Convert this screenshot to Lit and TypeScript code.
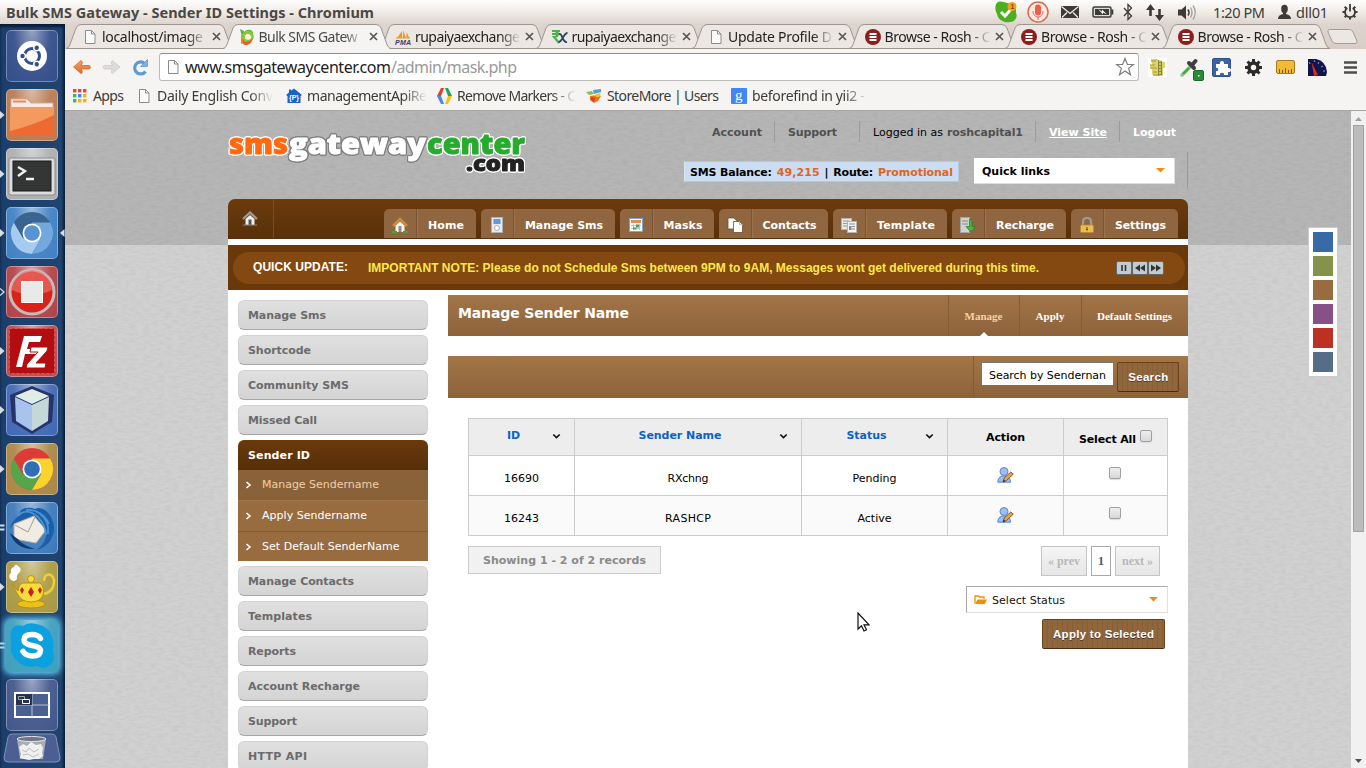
import { LitElement, html, css, svg, nothing } from "lit";
import { customElement, property } from "lit/decorators.js";

/** Text that is tracked in or out so that its run has a known width. */
@customElement("fit-text")
class FitText extends LitElement {
  @property({ type: Number }) w = 0;
  static styles = css`
    :host { display: inline-block; white-space: pre; flex: none; text-align: left; }
  `;
  render() { return html`<slot></slot>`; }
  updated() {
    const text = this.textContent || "";
    if (!this.w || !text.length) return;
    this.style.letterSpacing = "0px";
    this.style.width = "auto";
    const range = document.createRange();
    range.selectNodeContents(this);
    const natural = range.getBoundingClientRect().width;
    this.style.letterSpacing = `${(this.w - natural) / Math.max(1, text.length - 1)}px`;
    this.style.width = `${this.w}px`;
  }
}

const t = (s: string, w: number, cls = "") => html`<fit-text class=${cls} .w=${w}>${s}</fit-text>`;

const pageIcon = svg`<path d="M3.5 1.5h6l3.5 3.5v9.5h-9.5z" fill="#fbfbfb" stroke="#8b8b8b"/><path d="M9.5 1.5v3.5h3.500" fill="none" stroke="#8b8b8b"/>`;
const browseIcon = svg`<circle cx="8" cy="8" r="8" fill="#8b1f1f"/><path d="M4.500 5h7M4.500 8h7M4.500 11h7" stroke="#fff" stroke-width="1.800"/>`;
const greenP = svg`<path d="M2 5l3 1v8l-3 1z" fill="#f08a2a"/><path d="M1 0l4 2 1 3c-2 1-4 0-4-1z" fill="#5cb531"/><path d="M6 2c5-3 9 0 8 4-1 2-5 1-8 0z" fill="#5cb531"/><circle cx="9" cy="7.500" r="4.500" fill="none" stroke="#8cc63a" stroke-width="2.500"/><circle cx="9" cy="7.500" r="2.800" fill="#fff3d0"/><path d="M4 10c2 4 7 3 10-1-1 5-4 7-7 7s-4-2-3-6z" fill="#e8602a"/>`;
const pma = svg`<path d="M2 9l5-7v7zM8 9V1l3 8zM11.500 9l0-6 3 6z" fill="#f49a1a"/><path d="M1 9h14" stroke="#e0a040" stroke-width="1"/><text x="0" y="16" font-size="7" font-weight="700" font-style="italic" font-family="Liberation Sans, sans-serif" fill="#3a3a6a" textLength="16">PMA</text>`;
const rupee = svg`<path d="M0 2h8M0 5h8M2 2c5 0 5 6 0 6l5 6" fill="none" stroke="#4caf50" stroke-width="2.200"/><path d="M7 5c4-1 3 9 8 8M15.500 4c-4 0-5 9-9 9" fill="none" stroke="#2b4663" stroke-width="1.800"/>`;

const tabs = [
  { icon: pageIcon, text: "localhost/image", w: 101 },
  { icon: greenP, text: "Bulk SMS Gatew", w: 99, active: true },
  { icon: pma, text: "rupaiyaexchange", w: 105 },
  { icon: rupee, text: "rupaiyaexchange", w: 105 },
  { icon: pageIcon, text: "Update Profile D", w: 104 },
  { icon: browseIcon, text: "Browse - Rosh - C", w: 106 },
  { icon: browseIcon, text: "Browse - Rosh - C", w: 106 },
  { icon: browseIcon, text: "Browse - Rosh - C", w: 106 },
];

const bookmarks = [
  { box: 64, w: 31, text: "Apps", icon: svg`${[0, 1, 2].map(r => [0, 1, 2].map(c => svg`<rect x=${1 + c * 5} y=${1 + r * 5} width="3.400" height="3.400" fill=${[["#e8453c", "#e8453c", "#e8453c"], ["#3cba54", "#4285f4", "#f4b400"], ["#3cba54", "#f4b400", "#f4b400"]][r][c]}/>`))}` },
  { box: 150, w: 116, text: "Daily English Conv", fade: true, icon: pageIcon },
  { box: 150, w: 120, text: "managementApiRe", fade: true, icon: svg`<path d="M8 .5L16 7l-1.500 1V15h-13V8L0 7l3-2.500V1.500h2.200v1.300z" fill="#1565c8"/><text x="3" y="12" font-size="7" font-weight="700" font-family="Liberation Sans, sans-serif" fill="#fff" textLength="10">{P}</text>` },
  { box: 150, w: 119, text: "Remove Markers - C", fade: true, icon: svg`<path d="M5 0h3L5 8H1z" fill="#e33b2e"/><path d="M1 8h4l3 8H5z" fill="#4a86ee"/><path d="M9 0h3l4 8h-4z" fill="#1da462"/><path d="M12 8h4l-4 8H9z" fill="#fbbf12"/>` },
  { box: 145, w: 112, text: "StoreMore | Users", icon: svg`<path d="M0 4l6-1 2 3-5 1z" fill="#7cc653"/><path d="M7 2l8-1v3l-7 2z" fill="#5b9bd5"/><path d="M4 8l8-1 3 1-3 5-4 2-4-3z" fill="#f0721d"/><path d="M5 9l4 1-1 4-3-2z" fill="#d8401f"/><path d="M10 6l5-1-2 4-3 0z" fill="#f7c52c"/>` },
  { box: 140, w: 116, text: "beforefind in yii2 - ", fade: true, icon: svg`<rect width="16" height="16" rx="1" fill="#4285f4"/><text x="4" y="12" font-size="15" font-family="Liberation Serif, serif" fill="#fff">g</text>` },
];

const trayIcons = html`<svg class="tray" width="218" height="24" viewBox="995 0 218 24">
  <path d="M996 4c3-4 7-2 11-1 6 0 10 5 9 10 2 4-1 9-6 9-4 1-12-1-13-8-2-3-2-7-1-10z" fill="#4caf22"/>
  <path d="M1001 12l4 4 7-8" fill="none" stroke="#fff" stroke-width="3"/>
  <circle cx="1012" cy="6.500" r="4.500" fill="#f5a21a"/><text x="1010.500" y="9" font-size="7" font-weight="700" font-family="Liberation Sans, sans-serif" fill="#7a4a00">1</text>
  <circle cx="1038" cy="12" r="10" fill="#fbe9e2" stroke="#dc6a48" stroke-width="1.500"/>
  <rect x="1035" y="4.500" width="6" height="11" rx="3" fill="#e8604c"/><path d="M1033 11c0 8 10 8 10 0M1038 17v3" fill="none" stroke="#e8604c"/>
  <rect x="1061" y="6" width="18" height="12" fill="#3c3b37"/><path d="M1061.500 6.500l8.500 7 8.500-7M1062 17.500l5-5M1078 17.500l-5-5" fill="none" stroke="#f3efeb" stroke-width="1.300"/>
  <rect x="1093" y="7" width="18" height="10" rx="1.500" fill="#ddd" stroke="#3c3b37" stroke-width="1.500"/><rect x="1095" y="9" width="14" height="6" fill="#3c3b37"/><rect x="1111.500" y="9.500" width="1.800" height="5" fill="#3c3b37"/><path d="M1098 9l4 2.500 0-2 5 5-4-2 0 2z" fill="#fff"/>
  <path d="M1124 8l7.500 8-3.500 3.500V4.500l3.500 3.500-7.500 8" fill="none" stroke="#3c3b37" stroke-width="1.300"/>
  <path d="M1150.500 16V8M1159.500 9v8" stroke="#3c3b37" stroke-width="2.600"/><path d="M1146 10l4.500-6 4.500 6zM1155 15l4.500 6 4.500-6z" fill="#3c3b37"/>
  <path d="M1178 9.500h3.500l4.500-4v14l-4.500-4h-3.500z" fill="#3c3b37"/><path d="M1188 9.500q2 3 0 6" fill="none" stroke="#3c3b37" stroke-width="1.500"/><path d="M1190.500 7.500q3 5 0 10M1193 5.500q4.500 7 0 14" fill="none" stroke="#a9a5a0" stroke-width="1.400"/>
</svg>`;

const navIcons = html`<svg width="94" height="36" viewBox="65 49 94 36">
  <defs><linearGradient id="ba" x2="0" y2="1"><stop stop-color="#f7a468"/><stop offset="1" stop-color="#dd6a26"/></linearGradient></defs>
  <path d="M73.500 67l7.500-6.500q2 1 1 3.500l-1 1.500h8.500q2 1.500 0 3.500h-8.500l1 1.500q1 2.500-1 3z" fill="url(#ba)" stroke="#cf6a30" stroke-width=".8"/>
  <path d="M120 67l-7.500-6.500q-2 1-1 3.500l1 1.500h-8.500q-2 1.500 0 3.500h8.500l-1 1.500q-1 2.500 1 3z" fill="#dddcda" stroke="#cccac7" stroke-width=".8"/>
  <path d="M145.500 71.500a6 6 0 1 1-1.500-8.500" fill="none" stroke="#5f9bd3" stroke-width="3.200"/><path d="M140.500 66.500h7v-7z" fill="#7fb2e2" stroke="#5f9bd3" stroke-width=".8"/>
</svg>`;

const extIcons = html`<svg width="227" height="36" viewBox="1139 49 227 36">
  <rect x="1148" y="58" width="19" height="19" fill="#fff"/><path d="M1151 59h7v3h7v6h-2v8h-9l-2-2v-5h-2v-4h2z" fill="#dcd26a"/><path d="M1151 61h5M1150 65h5M1151 68h6M1153 72h4M1153 75h7" stroke="#a2973a" stroke-width="1.200"/><path d="M1158 60l4 1v14l-4 1z" fill="#8f8530"/><path d="M1160 60v16" stroke="#f5eea0" stroke-width="1.200" stroke-dasharray="2 1"/>
  <path d="M1182 75l9-9" stroke="#8cc58a" stroke-width="3.500" stroke-linecap="round"/><path d="M1183 74l6-6" stroke="#2fae3c" stroke-width="2"/><path d="M1189 63l5 5M1192 65l3.500-4" stroke="#3f3f3f" stroke-width="4" stroke-linecap="round"/>
  <rect x="1193.500" y="70.500" width="10" height="10" rx="1.500" fill="#2b8b3a" stroke="#1d6b2a"/><rect x="1198" y="75" width="1.500" height="1.500" fill="#fff"/>
  <rect x="1212.500" y="58.500" width="18" height="18" rx="1.500" fill="#3c62a4" stroke="#30518c"/><path d="M1215 64h4c-1-4 5-4 4 0h4v4c4-1 4 5 0 4v3h-4c1-3-5-3-4 0h-4v-4c3 1 3-4 0-3z" fill="#fff" transform="translate(1 0)"/>
  <g transform="translate(1253.500 67.500)"><circle r="4.500" fill="none" stroke="#2b2b2b" stroke-width="3.600"/>${[0, 45, 90, 135, 180, 225, 270, 315].map(a => svg`<rect x="-1.500" y="-8.500" width="3" height="3.500" fill="#2b2b2b" transform=${`rotate(${a})`}/>`)}</g>
  <rect x="1276.500" y="60.500" width="18" height="13" rx="1.500" fill="#f2bb35" stroke="#a37b20"/><path d="M1279.500 73v-4M1282.500 73v-3M1285.500 73v-5M1288.500 73v-3M1291.500 73v-4" stroke="#7d5a10"/>
  <path d="M1308 59h8q10 2 11 13l-1 4h-18z" fill="#11164a"/><path d="M1314 76l-2.500-14 6.500 13z" fill="#e0281e"/><path d="M1309 62l1 2M1314 60l1 2M1319 62l-1 2M1323 66l-2 1M1325 71l-2 0" stroke="#7f9bea"/>
  <path d="M1344 62.500h13M1344 67.500h13M1344 72.500h13" stroke="#4d4d4d" stroke-width="2.600"/>
</svg>`;

const chromeWheel = (top: string, left: string, right: string, mid: string) => svg`
  <circle cx="26" cy="26" r="21" fill=${top}/>
  <path d="M7.800 15.500A21 21 0 0 0 26 47l9.100-15.700L16.900 31.300z" fill=${left}/>
  <path d="M44.200 15.500A21 21 0 0 1 26 47l9.100-15.700L26 15.500z" fill=${right}/>
  <circle cx="26" cy="26" r="9.500" fill="#fff"/><circle cx="26" cy="26" r="7.800" fill=${mid}/>`;

const launcher = [
  { bg: "#2c4786", mark: "", g: svg`<circle cx="26" cy="26" r="15" fill="#fff"/><circle cx="26" cy="26" r="7.500" fill="none" stroke="#34508b" stroke-width="3"/>${[0, 120, 240].map(a => svg`<g transform=${`rotate(${a} 26 26)`}><circle cx="16.500" cy="26" r="3.600" fill="#fff"/><circle cx="16.500" cy="26" r="2.200" fill="#34508b"/></g>`)}` },
  { bg: "#b5764e", mark: "r", g: svg`<path d="M5 16v-6h16l4 4h22v8H5z" fill="#f6ebe4" stroke="#d9a98a"/><path d="M7 12.500h13" stroke="#ee8850" stroke-width="2"/><path d="M4 18h44v27q0 2-2 2H6q-2 0-2-2z" fill="#ee6a31"/><path d="M4 18h44v8Q28 36 4 42z" fill="#f59a5e"/>` },
  { bg: "#a9abad", mark: "r", g: svg`<rect x="3" y="10" width="46" height="37" rx="2" fill="#dcdcdc" stroke="#8b8b8b"/><rect x="7" y="13" width="38" height="30" fill="#333634" stroke="#1b1b1b"/><path d="M12 19l7 4-7 5M20 31h8" fill="none" stroke="#f0f0f0" stroke-width="2.400"/>` },
  { bg: "#3a7cc2", mark: "rl", g: chromeWheel("#38648f", "#a6cbf0", "#72a8de", "#5a93d4") },
  { bg: "#b03c42", mark: "h", g: svg`<circle cx="26" cy="26" r="22" fill="#d92318" stroke="#c3bcbc" stroke-width="3"/><path d="M6 24a20 20 0 0 1 40 0Q26 34 6 24z" fill="#ef7a74" opacity=".6"/><rect x="15.500" y="15.500" width="21" height="21" fill="#e9e9e7" stroke="#fff"/>` },
  { bg: "#b7474c", mark: "r", g: svg`<rect x="3.500" y="3.500" width="45" height="45" fill="#b30d0f" stroke="#d85a5c" stroke-dasharray="3 2"/><path d="M10 42l8-31h18l-2 6H23l-2 7h11l-1 5H19l-3 13z" fill="#fff"/><path d="M25 22h17l-1 4-11 12h10l-1 5H20l1-4 11-12h-8z" fill="#fff" stroke="#b30d0f" stroke-width="1"/>` },
  { bg: "#3c63b2", mark: "r", g: svg`<path d="M26 2l22 9-2 27-20 12L6 38 4 11z" fill="#26346a"/><path d="M26 5l17 7-17 8-17-8z" fill="#e0ece8"/><path d="M9 13l17 8v26L10 37z" fill="#a8c4ee"/><path d="M43 13l-17 8v26l16-10z" fill="#c4d8d8"/>` },
  { bg: "#a8823f", mark: "r", g: chromeWheel("#de3b38", "#55a64b", "#fcd32c", "#2f6fb8") },
  { bg: "#3675b8", mark: "e", g: svg`<path d="M4 26C5 20 12 14 14 13 12 7 22 4 29 7c8-4 17 5 19 17 1 12-7 22-18 24 8-5 11-12 10-20L30 17 8 22z" fill="#1c5fa8"/><path d="M8 22l20-8 12 14-10 13-22-4z" fill="#f0ece4" stroke="#b8b0a4"/><path d="M9 23l13 7 7-15" fill="none" stroke="#a39c92"/><path d="M4 31c3 11 14 17 25 16-8-3-13-5-16-9z" fill="#123a74"/><path d="M12 14c6-7 14-4 20 1 4 5 7 8 8 18M20 8c10-1 19 5 23 14M34 12c6 4 9 11 8 20" fill="none" stroke="#4a94d8" stroke-width="1.800"/>` },
  { bg: "#a8963c", mark: "r", g: svg`<path d="M4 18q-2-4 1-6-1-5 3-6 1-4 4-1 4 2 2 6-4 3-3 7-3 4-7 0z" fill="#fff"/><ellipse cx="25" cy="43" rx="14" ry="4" fill="#ecc01c" stroke="#b48a10"/><path d="M38 20c0-10 11-8 10 2-1 7-5 10-10 11" fill="none" stroke="#f0cf35" stroke-width="2.500"/><path d="M6 23l6 7q1-7 5-8h17q5 4 3 12-3 7-12 7-10 0-14-9z" fill="#fadb3c" stroke="#bb9210"/><circle cx="25" cy="18" r="3.500" fill="#fadb3c" stroke="#bb9210"/><path d="M16 26l2 3-2 4-2-4zM25 26l3 5-3 5-3-5zM34 26l2 3-2 4-2-4z" fill="#c61f1f"/>` },
  { bg: "#389cba", mark: "e", glow: true, g: svg`<path d="M5 12Q7 3 17 6 22 2 30 4 44 6 47 20q1 6 0 11 4 14-9 17-4 0-7-2-12 3-20-5-8-8-6-18-1-6 0-11z" fill="#0ba0e0"/><path d="M34.500 18.500q-2-4-8.500-4-8 0-8 5.500 0 4 8 5.500t8.500 4.500q0 6-8 6-6.500 0-9.500-4.500" fill="none" stroke="#fff" stroke-width="5.500" stroke-linecap="round"/>` },
  { bg: "#3c5088", mark: "", g: svg`<rect x="9" y="14" width="34" height="24" fill="#4a6090" stroke="#fff" stroke-width="2"/><path d="M26 14v24M9 26h34" stroke="#b7bfd0"/><rect x="10" y="15" width="16" height="11" fill="#26324e"/><path d="M12.500 17.500h6v3h-6z" fill="none" stroke="#9ea5b4"/><path d="M16.500 20.500h7v4h-7z" fill="none" stroke="#fff"/>` },
];

const navItems = [
  { text: "Home", w: 92, tw: 36, icon: svg`<path d="M1 9l7-7 7 7" fill="none" stroke="#c98a3c" stroke-width="2.500"/><path d="M3.500 8.500L8 4.500l4.500 4V15h-9z" fill="#f3f1ea"/><rect x="6.500" y="9" width="3" height="6" fill="#8b8b8b"/><path d="M0 15h5M11 15h5" stroke="#46a33a" stroke-width="2"/>` },
  { text: "Manage Sms", w: 134, tw: 78, icon: svg`<rect x="2.500" y=".5" width="11" height="15" fill="#e6eaee" stroke="#a9b2ba"/><rect x="4.500" y="2" width="7" height="5" fill="#5d9ae0"/><circle cx="8" cy="11" r="2.500" fill="#fff" stroke="#aab"/>` },
  { text: "Masks", w: 94, tw: 39, icon: svg`<rect x="1.500" y="1.500" width="13" height="13" fill="#fff" stroke="#7ba6dc"/><rect x="3" y="3" width="10" height="3" fill="#f08a4a"/><path d="M3 8.500h10M3 11.500h9M5.500 7v6M8.500 7v6M11.500 7v6" stroke="#a9c3e4"/><path d="M8 7.500h3v3H8zM5 10.500h3v2H5z" fill="#54a044"/>` },
  { text: "Contacts", w: 109, tw: 54, icon: svg`<path d="M1 1h6l3 3v8H1z" fill="#fff" stroke="#6a5030" stroke-width=".8"/><path d="M6.500 4.500h6l3 3v8h-9z" fill="#fff" stroke="#6a5030" stroke-width=".8"/><path d="M12.500 4.500v3h3" fill="none" stroke="#bbb"/>` },
  { text: "Template", w: 114, tw: 58, icon: svg`<rect x=".5" y="1.500" width="10" height="11" fill="#e8e8e8" stroke="#b4b4b4"/><path d="M2 4h6M2 6.500h4M2 9h4" stroke="#999"/><rect x="6.500" y="4.500" width="9" height="11" fill="#f4f4f4" stroke="#b4b4b4"/><path d="M8 7h6M11 12h3M11 9.500h3" stroke="#888"/><rect x="8" y="9" width="2.500" height="4" fill="#888"/>` },
  { text: "Recharge", w: 114, tw: 58, icon: svg`<rect x=".5" y=".5" width="9" height="15" fill="#cfd2cf" stroke="#a4a6a4"/><path d="M2 4h6M2 7h6" stroke="#8b8b8b"/><path d="M9.500 2.500h2.500v7h3.500l-4.800 5.500-4.700-5.500h3.500z" fill="#4bb543" stroke="#20802a" stroke-width=".7"/>` },
  { text: "Settings", w: 107, tw: 51, icon: svg`<path d="M4 8V5q0-4 4-4t4 4v3" fill="none" stroke="#9b9c9e" stroke-width="2.200"/><rect x="1.500" y="8" width="13" height="7.500" rx="1" fill="#ecbd4e" stroke="#b98a2c" stroke-width=".8"/><path d="M8 10v3.500M7 12.500h2" stroke="#6b4a10"/>` },
];

const sideA = [["Manage Sms", 78], ["Shortcode", 63], ["Community SMS", 101], ["Missed Call", 69]] as [string, number][];
const sideB = [["Manage Contacts", 106], ["Templates", 64], ["Reports", 48], ["Account Recharge", 112], ["Support", 49], ["HTTP API", 59]] as [string, number][];
const sub = [["Manage Sendername", 117], ["Apply Sendername", 105], ["Set Default SenderName", 137.5]] as [string, number][];

const editUser = html`<svg class="edit" width="17" height="16" viewBox="0 0 17 16"><path d="M.8 15.200q-.3-4.500 4.200-6.200h4q4.500 1.500 4.500 6.200z" fill="#9dbff0" stroke="#5d86c8"/><circle cx="7" cy="4.500" r="4" fill="#9dbff0" stroke="#5d86c8"/><path d="M6 15l1.200-4 6.600-6 2.400 2.200L9.500 13.500z" fill="#e2a44c" stroke="#7b4d18" stroke-width=".9"/><path d="M6 15l.8-2.300 1.600 1.500z" fill="#222"/></svg>`;
const sortArrow = html`<svg class="sort" width="35" height="10" viewBox="0 0 35 10"><path d="M14.300 3.500l3.200 3 3.200-3" fill="none" stroke="#111" stroke-width="1.700"/></svg>`;

@customElement("app-root")
class AppRoot extends LitElement {
  static styles = css`
    :host { display: flex; flex-direction: column; width: 1366px; height: 768px; overflow: hidden; position: relative;
      font: 11px/14px "DejaVu Sans", sans-serif; color: #111; }
    * { box-sizing: border-box; }
    svg { flex: none; display: block; }
    .ubuntu { font-family: "Noto Sans", "Open Sans", sans-serif; font-size: 14.500px; line-height: 20px; color: #3c3b37; }
    .panel { height: 24px; flex: none; display: flex; align-items: center; padding: 0 0 1px 6px; background: linear-gradient(#fefefe, #f0ebe6 50%, #ddd4cd); }
    .panel .title { font-weight: 700; color: #4a4844; }
    .panel .tray { margin-left: auto; }
    .panel .user { margin: 0 4px 0 12px; }
    .panel .power { margin: 0 8px 0 14px; }
    .below { flex: 1; display: flex; min-height: 0; }
    .launcher { width: 65px; flex: none; padding-top: 6px; background: linear-gradient(90deg, #1b3f6d, #20446f 94%, #0c1f3c); display: flex; flex-direction: column; gap: 7px; box-shadow: inset 0 3px 3px #0a1a33; }
    .slot { display: flex; align-items: center; height: 52px; }
    .slot .mark { width: 6px; }
    .tile { width: 52px; height: 52px; border-radius: 5px; overflow: hidden; background-image: radial-gradient(ellipse at 50% 0, #ffffff80, #ffffff18 50%, #ffffff08); box-shadow: inset 0 0 0 1px #ffffff55; }
    .glow { box-shadow: 0 0 6px 2px #64d8ff; }
    .trash { margin: -5px 0 0 3px; }
    .win { flex: 1; min-width: 0; display: flex; flex-direction: column; background: #f5f4f2; }
    .tabs { height: 25px; flex: none; display: flex; background: linear-gradient(#ddd4cd, #d8cec7); padding-left: 1px; position: relative; font-size: 14px; }
    .tab { width: 168px; margin-right: -11.500px; height: 25px; flex: none; display: grid; }
    .tab > * { grid-area: 1 / 1; }
    .tab .in { display: flex; align-items: center; padding-left: 16px; color: #222; }
    .tab .clip { width: 106px; margin: 0 4px 0 4px; overflow: hidden; }
    .tab .clip, .fade { -webkit-mask-image: linear-gradient(90deg, #000 80%, #0000); mask-image: linear-gradient(90deg, #000 80%, #0000); }
    .active { z-index: 1; }
    .tab.active .in { color: #4a4a4a; }
    .newtab { margin-left: 8px; }
    .tool { height: 36px; flex: none; display: flex; align-items: center; }
    .omni { width: 980px; height: 28px; border: 1px solid #bdbbb7; border-top-color: #8f8d8a; border-radius: 3px; background: #fff; display: flex; align-items: center; padding: 0 3px 0 5px; font-size: 16px; }
    .omni .host { color: #222; margin-left: 5px; }
    .omni .path { color: #999; }
    .omni .star { margin-left: auto; }
    .marks { height: 26px; flex: none; display: flex; align-items: center; padding: 0 0 3px 7px; border-bottom: 1px solid #a7a5a2; font-size: 14px; }
    .bm { display: flex; align-items: center; gap: 5px; flex: none; }
    .view { flex: 1; display: flex; min-height: 0; }
    .page { width: 1286px; height: 657px; flex: none; display: flex; flex-direction: column; align-items: center; overflow: hidden; position: relative; background: linear-gradient(#b6b6b6 134px, #d1d1d1 134px); }
    .grain { position: absolute; inset: 0; }
    .wrap { width: 960px; position: relative; flex: none; }
    .wrap fit-text { padding-top: 2px; }
    .head { height: 88px; display: flex; justify-content: space-between; }
    .logo text { stroke-width: .9px; }
    .halo { filter: drop-shadow(1px 0 #fff) drop-shadow(-1px 0 #fff) drop-shadow(0 1px #fff) drop-shadow(0 -1px #fff); }
    .rim { filter: drop-shadow(1px 0 #7f7f7f) drop-shadow(-1px 0 #7f7f7f) drop-shadow(0 1px #7f7f7f) drop-shadow(0 -1px #7f7f7f); }
    .right { display: flex; flex-direction: column; }
    .links { height: 21px; margin-top: 10px; display: flex; align-items: center; font-weight: 700; color: #505050; }
    .links i { width: 1px; height: 21px; background: #9b9b9b; }
    .links .w { color: #fff; }
    .links .u { text-decoration: underline; }
    .links .n { font-weight: 400; color: #000; }
    .m1 { margin: 0 12px 0 0; } .m2 { margin: 0 22px 0 13px; } .m3 { margin: 0 4px 0 13px; } .m4 { margin: 0 12px 0 0; } .m5 { margin: 0 12px 0 13px; } .m6 { margin-left: 13px; }
    .bal { display: flex; font-weight: 700; color: #000; align-items: flex-start; margin: 16px 0 0 -28px; }
    .box { width: 275px; height: 21px; background: #cbddf2; border: 1px solid #b4c9dd; border-left-color: #d7e5f5; display: flex; align-items: center; justify-content: space-between; padding: 0 5px; margin-top: 3px; }
    .box b { color: #e0641e; display: contents; }
    .ql { width: 201px; height: 26px; background: #fff; border-right: 1px solid #ddd; border-bottom: 1px solid #ddd; margin-left: 15px; display: flex; align-items: center; justify-content: space-between; padding: 0 9px 0 8px; }
    .edge { width: 1px; height: 37px; background: #999; margin: -6px 0 0 12px; }
    .nav { height: 40px; background: linear-gradient(#6c3b0c, #58300a); border-radius: 7px 7px 0 0; display: flex; align-items: flex-end; gap: 5px; padding: 0 10px 1px 0; }
    .homecell { width: 46px; height: 39px; border-right: 1px solid #7d4d20; display: flex; justify-content: center; padding: 12px 1px 0 0; margin-right: auto; }
    .ni { height: 29px; display: flex; background: #8f663f; border-radius: 5px 5px 0 0; color: #fff; font-weight: 700; }
    .ni .ic { width: 33px; border-right: 1px solid #7b5531; display: flex; justify-content: center; padding-top: 8px; }
    .ni .tx { flex: 1; display: flex; align-items: center; justify-content: center; padding: 3px 2px 0 0; border-left: 1px solid #9a724b; }
    .quick { height: 45px; background: #69390c; padding: 7px 3px 6px 5px; }
    .gap6 { height: 6px; background: #fff; }
    .pill { height: 32px; border-radius: 16px; background: #844910; display: flex; align-items: center; padding: 0 21px 0 20px; font: 700 12px/14px "Liberation Sans", sans-serif; color: #fff; }
    .pill fit-text { padding: 0; margin-top: -2px; }
    .pill .note { margin: 0 0 0 20px; color: #fbe84a; }
    .pill svg { margin-left: auto; }
    .body { height: 478px; background: #fff; display: flex; padding-top: 5px; align-items: flex-start; }
    .side { width: 190px; margin: 5px 20px 0 10px; display: flex; flex-direction: column; gap: 5px; font-weight: 700; color: #6b6b6b; }
    .si { height: 30px; border-radius: 6px; background: linear-gradient(#e0e0e0, #d4d4d4); border: 1px solid #d2d2d2; border-bottom: 1px solid #a6a6a6; display: flex; align-items: center; padding-left: 9px; }
    .open { color: #fff; font-weight: 400; }
    .open .hd { height: 30px; border-radius: 6px 6px 0 0; background: linear-gradient(#6a3a0c, #562e08); display: flex; align-items: center; padding-left: 10px; font-weight: 700; }
    .sm { height: 31px; background: #996c40; border-bottom: 1px solid #85592f; display: flex; align-items: center; padding-left: 6px; gap: 8px; }
    .sm.cur { background: #8a6239; color: #f0cfa8; border-bottom-color: #a0764c; }
    .sm fit-text { padding-top: 0; }
    .sm:last-child { border-bottom: 0; height: 29px; }
    .main { width: 740px; }
    .bar { background: linear-gradient(#a37547, #8d633b); display: flex; justify-content: space-between; }
    .hbar { height: 41px; }
    .hbar .h { font-size: 14px; font-weight: 700; color: #fff; margin: 9px 0 0 10px; }
    .mt { display: flex; font: 700 11px/14px "Liberation Serif", serif; color: #fff; }
    .mt > div { width: 62px; height: 41px; display: flex; flex-direction: column; align-items: center; padding: 12px 1px 0 0; border-left: 1px solid #855c34; justify-content: space-between; }
    .mt > .c { width: 71px; color: #f6d0a4; }
    .mt > .wide { width: 107px; }
    .sbar { height: 42px; margin-top: 20px; }
    .sf { margin-left: auto; width: 215px; border-left: 1px solid #855c34; display: flex; padding: 6px 9px 0 8px; gap: 4px; align-items: flex-start; }
    .inp { width: 132px; height: 23px; background: #fff; border-top: 1px solid #777; margin-right: auto; display: flex; align-items: center; padding: 1px 0 0 7px; color: #000; }
    .btn { display: flex; align-items: center; justify-content: center; height: 30px; border: 1px solid #6b4219; border-bottom-color: #4e2a0c; border-radius: 2px; background: repeating-linear-gradient(90deg, #90663d 0 4px, #885e35 4px 5px); font: 700 11.500px/14px "Liberation Sans", sans-serif; color: #fff; text-shadow: 0 1px 0 #4b3a3a; }
    .btn fit-text { padding: 0; }
    .sbtn { width: 62px; }
    .content { margin: 20px 20px 0; }
    .table { display: grid; grid-template-columns: 106px 227px 146px 116px 104px; grid-template-rows: 37px 40px 40px; border-left: 1px solid #ccc; border-top: 1px solid #ccc; color: #000; }
    .table > div { border-right: 1px solid #ccc; border-bottom: 1px solid #ccc; display: flex; align-items: center; justify-content: center; padding-top: 5px; }
    .table .th { background: #ededed; font-weight: 700; padding-top: 0; }
    .table .lk { color: #0a62c8; padding: 0 0 4px 19px; justify-content: space-between; }
    .lk .lab { flex: 1; display: flex; justify-content: center; }
    .sort { margin-top: 2px; }
    .table .z { background: #fafafa; }
    .table .act { padding: 0 0 2px; }
    .table .ck { padding: 0 1px 5px 0; }
    .table .all { padding: 3px 0 0 0; gap: 5px; }
    .cb { width: 12px; height: 12px; border: 1px solid #a0a0a0; border-radius: 2px; background: linear-gradient(#eee, #d8d8d8); box-shadow: 0 1px 1px #ddd; flex: none; }
    .all .cb { margin: -6px 0 0 -1px; }
    .foot { display: flex; margin-top: 10px; align-items: flex-start; height: 40px; }
    .show { width: 193px; height: 28px; border: 1px solid #ccc; background: #f1f1f1; color: #8a8a8a; font-weight: 700; display: flex; align-items: center; justify-content: center; margin-right: auto; }
    .pg { height: 30px; border: 1px solid #c4c4c4; background: linear-gradient(#f5f5f5, #e6e6e6); color: #b8b8b8; font: 700 12px/14px "Liberation Serif", serif; display: flex; align-items: center; justify-content: center; margin-right: 4px; }
    .pg fit-text { padding: 0; }
    .pg.on { background: #fff; color: #555; width: 20px; border-color: #aaa; }
    .pv { width: 46px; } .nx { width: 45px; margin-right: 8px; }
    .sel { width: 202px; height: 27px; margin-left: auto; border: 1px solid #e0e0e0; border-top-color: #aaa; border-left-color: #aaa; display: flex; align-items: center; padding: 0 9px 0 7px; gap: 5px; }
    .sel .dn { margin-left: auto; }
    .abtn { width: 123px; margin: 6px 3px 0 auto; }
    .sw { position: absolute; left: 1243px; top: 116px; width: 30px; height: 150px; background: #fff; border: 1px solid #ccc; display: flex; flex-direction: column; gap: 4px; padding: 4px; align-items: center; }
    .sw i { width: 20px; height: 20px; }
    .s1 { background: #386ba6; } .s2 { background: #84924a; } .s3 { background: #996c40; } .s4 { background: #885088; } .s5 { background: #bd3122; } .s6 { background: #566d87; }
    .scroll { width: 15px; background: #f1f1f1; display: flex; flex-direction: column; align-items: center; }
    .thumb { width: 11px; height: 407px; background: #bcbcbc; border: 1px solid #a2a2a2; }
    .scroll .down { margin-top: auto; }
    .cursor { position: absolute; left: 857px; top: 612px; }
  `;

  tabShape(active: boolean) {
    const fill = active ? "#f5f4f2" : "#ece7e3";
    return html`<svg width="168" height="25" viewBox="0 0 168 25"><path d="M0 24.500q3-.5 4-4L10 4q1.500-3.500 5-3.500h138q3.500 0 5 3.500l6 16.500q1 3.500 4 4" fill=${fill} stroke="#9c9691"/>${active ? svg`<path d="M2 24.500h164" stroke=${fill} stroke-width="2"/>` : svg`<path d="M0 24.500h168" stroke="#9c9691"/>`}</svg>`;
  }

  mark(m: string) {
    return html`<svg class="mark" width="6" height="14" viewBox="0 0 6 14">${m.includes("r") ? svg`<path d="M0 3v8l4.500-4z" fill="#d8dde4"/>` : m === "h" ? svg`<path d="M0 3.500l4 3.500-4 3.500" fill="none" stroke="#d8dde4" stroke-width="1.300"/>` : m === "e" ? svg`<path d="M0 4.500h4.500M0 8.500h4.500" stroke="#bfe0ee" stroke-width="2"/>` : nothing}</svg>`;
  }

  render() {
    return html`
      <div class="panel ubuntu">
        ${t("Bulk SMS Gateway - Sender ID Settings - Chromium", 368, "title")}
        ${trayIcons}
        ${t("1:20 PM", 52)}
        <svg class="user" width="15" height="16" viewBox="0 0 15 16"><ellipse cx="7.500" cy="5" rx="3.300" ry="4.200" fill="#3c3b37"/><path d="M1 15q0-4 5-5V8h3v2q5 1 5 5z" fill="#3c3b37"/></svg>
        ${t("dll01", 32)}
        <svg class="power" width="16" height="16" viewBox="0 0 16 16"><path d="M5.300 4a5 5 0 1 0 5.400 0" fill="none" stroke="#3c3b37" stroke-width="1.800"/><path d="M8 0v7.500" stroke="#3c3b37" stroke-width="1.800"/><path d="M4.500 4.500L2.700 2.700M11.500 4.500l1.800-1.800M3 8H.5M13 8h2.500M4.500 11.500l-1.800 1.800M11.500 11.500l1.800 1.800M8 13v2.500" stroke="#3c3b37" stroke-width="2"/></svg>
      </div>
      <div class="below">
        <div class="launcher">
          ${launcher.map(l => html`<div class="slot">${this.mark(l.mark)}
            <div class="tile ${l.glow ? "glow" : ""}" style="background-color:${l.bg}"><svg width="52" height="52">${l.g}</svg></div>
            ${l.mark === "rl" ? html`<svg width="7" height="12"><path d="M6.500 2v8L2 6z" fill="#d8dde4"/></svg>` : nothing}</div>`)}
          <svg class="trash" width="58" height="30" viewBox="0 0 58 30"><path d="M9 1h40q3 0 4 3l4 21q0 4-4 4H5q-4 0-4-4L5 4q1-3 4-3z" fill="#4b5f94" stroke="#8291b8"/><path d="M14 6h29l-3 20H17z" fill="#a9aeb2"/><path d="M16 14l4-3 4 2 4-4 5 3 5-1 2 4-1 5 1 3-4 3h-5l-5 1-5-1-4-1 1-4z" fill="#f0f0ee"/><path d="M19 17l4 2 3-4 5 4 5-3M20 22l5-1 5 3 6-3" fill="none" stroke="#bcbfbd"/><ellipse cx="28.500" cy="6" rx="14.500" ry="2.500" fill="#6e7686" stroke="#e6e6e6"/></svg>
        </div>
        <div class="win">
          <div class="tabs ubuntu">
            ${tabs.map(b => html`<div class="tab ${b.active ? "active" : ""}">${this.tabShape(!!b.active)}
              <div class="in"><svg width="16" height="16" viewBox="0 0 16 16">${b.icon}</svg><div class="clip">${t(b.text, b.w)}</div>
                <svg width="9" height="9"><path d="M1 1l7 7M8 1l-7 7" stroke="#5a5652" stroke-width="1.700"/></svg></div></div>`)}
            <svg class="newtab" width="34" height="25"><path d="M3.500 5.500h20q2.500 0 3.500 2.500l4 9q.5 2.500-2 2.500H10q-3 0-4-2.500L2 8q-.5-2.500 1.500-2.500z" fill="#ece7e3" stroke="#a39c96"/></svg>
          </div>
          <div class="tool ubuntu">
            ${navIcons}
            <div class="omni"><svg width="15" height="16" viewBox="0 0 15 16">${pageIcon}</svg>${t("www.smsgatewaycenter.com", 206, "host")}${t("/admin/mask.php", 126, "path")}
              <svg class="star" width="20" height="20" viewBox="0 0 20 20"><path d="M10 1.500l2.400 6h6.100l-4.900 3.900 1.900 6.300L10 14l-5.500 3.700 1.900-6.300L1.500 7.500h6.100z" fill="#fff" stroke="#7d7d7d" stroke-width="1.200"/></svg></div>
            ${extIcons}
          </div>
          <div class="marks ubuntu">
            ${bookmarks.map(b => html`<div class="bm" style="width:${b.box}px"><svg width="16" height="16" viewBox="0 0 16 16">${b.icon}</svg>${t(b.text, b.w, b.fade ? "fade" : "")}</div>`)}
          </div>
          <div class="view">
            <div class="page">
              <svg class="grain" width="1286" height="657"><filter id="paper" x="0" y="0" width="100%" height="100%"><feTurbulence type="fractalNoise" baseFrequency=".14 .4" numOctaves="4" seed="4"/><feColorMatrix values="0 0 0 0 0  0 0 0 0 0  0 0 0 0 0  .5 0 0 0 -.18"/></filter><rect width="1286" height="657" filter="url(#paper)" opacity=".16"/></svg>
              <div class="wrap">
                <div class="head">
                  <svg class="logo" width="304" height="70" viewBox="0 0 304 70" font-family="Open Sans, Noto Sans, sans-serif" font-weight="800" stroke-linejoin="round">
                    <g class="halo"><text x="1" y="43" font-size="28" textLength="59" lengthAdjust="spacingAndGlyphs" fill="#ff6a10" stroke="#ff6a10">sms</text>
                    <text x="199" y="43" font-size="28" textLength="98" lengthAdjust="spacingAndGlyphs" fill="#27ab2e" stroke="#27ab2e">center</text>
                    <text x="238" y="60" font-size="21" textLength="59" lengthAdjust="spacingAndGlyphs" fill="#222" stroke="#222">.com</text></g>
                    <g class="rim"><text x="61" y="43" font-size="28" textLength="137" lengthAdjust="spacingAndGlyphs" fill="#fff" stroke="#fff">gateway</text></g>
                  </svg>
                  <div class="right">
                    <div class="links">${t("Account", 50, "m1")}<i></i>${t("Support", 49, "m2")}<i></i>${t("Logged in as", 70, "m3 n")}${t("roshcapital1", 76, "m4")}<i></i>${t("View Site", 58, "w u m5")}<i></i>${t("Logout", 43, "w m6")}</div>
                    <div class="bal">
                      <div class="box">${t("SMS Balance:", 82)}<b>${t("49,215", 43)}</b>${t("|", 4)}${t("Route:", 40)}<b>${t("Promotional", 75)}</b></div>
                      <div class="ql">${t("Quick links", 68)}<svg width="9" height="5"><path d="M0 0h9L4.500 4.500z" fill="#ef8e0c"/></svg></div>
                      <div class="edge"></div>
                    </div>
                  </div>
                </div>
                <div class="nav">
                  <div class="homecell"><svg width="16" height="15" viewBox="0 0 16 15"><path d="M1 8l7-6.500L15 8" fill="none" stroke="#9a9a9c" stroke-width="2.300"/><path d="M3.500 8L8 4l4.500 4v6h-9z" fill="#efefef"/><rect x="6.500" y="8.500" width="3" height="5.500" fill="#555"/><path d="M1 14h14" stroke="#888"/></svg></div>
                  ${navItems.map(n => html`<div class="ni" style="width:${n.w}px"><div class="ic"><svg width="16" height="16" viewBox="0 0 16 16">${n.icon}</svg></div><div class="tx">${t(n.text, n.tw)}</div></div>`)}
                </div>
                <div class="gap6"></div>
                <div class="quick"><div class="pill">${t("QUICK UPDATE:", 95)}${t("IMPORTANT NOTE: Please do not Schedule Sms between 9PM to 9AM, Messages wont get delivered during this time.", 671, "note")}
                  <svg width="48" height="14">${[0, 16, 32].map(x => svg`<rect x=${x + .5} y=".5" width="15" height="13" rx="1.500" fill="#c3cbcc" stroke="#5b6a70"/>`)}<path d="M6 4v6M9.500 4v6" stroke="#333" stroke-width="1.600"/><path d="M24 3.500v7L19 7zM29 3.500v7L24 7zM35 3.500v7L40 7zM40 3.500v7L45 7z" fill="#333"/></svg></div></div>
                <div class="body">
                  <div class="side">
                    ${sideA.map(([s, w]) => html`<div class="si">${t(s, w)}</div>`)}
                    <div class="open"><div class="hd">${t("Sender ID", 62)}</div>
                      ${sub.map(([s, w], i) => html`<div class="sm ${i ? "" : "cur"}"><svg width="10" height="8"><path d="M2.500 1l3.500 3-3.500 3" fill="none" stroke="#fff" stroke-width="1.600"/></svg>${t(s, w)}</div>`)}</div>
                    ${sideB.map(([s, w]) => html`<div class="si">${t(s, w)}</div>`)}
                  </div>
                  <div class="main">
                    <div class="bar hbar">${t("Manage Sender Name", 171, "h")}
                      <div class="mt"><div class="c">${t("Manage", 38)}<svg width="8" height="4"><path d="M4 0l4 4H0z" fill="#fff"/></svg></div><div>${t("Apply", 29)}</div><div class="wide">${t("Default Settings", 75)}</div></div></div>
                    <div class="bar sbar"><div class="sf"><div class="inp">${t("Search by Sendernan", 117)}</div><div class="btn sbtn">${t("Search", 40)}</div></div></div>
                    <div class="content">
                      <div class="table">
                        <div class="th lk"><span class="lab">${t("ID", 0)}</span>${sortArrow}</div>
                        <div class="th lk"><span class="lab">${t("Sender Name", 83)}</span>${sortArrow}</div>
                        <div class="th lk"><span class="lab">${t("Status", 40)}</span>${sortArrow}</div>
                        <div class="th">${t("Action", 39)}</div>
                        <div class="th all">${t("Select All", 57)}<span class="cb"></span></div>
                        ${([["16690", "RXchng", 41, "Pending", 44, ""], ["16243", "RASHCP", 46, "Active", 34, "z"]] as any[]).map(r => html`
                          <div class=${r[5]}>${t(r[0], 35)}</div><div class=${r[5]}>${t(r[1], r[2])}</div><div class=${r[5]}>${t(r[3], r[4])}</div>
                          <div class="act ${r[5]}">${editUser}</div><div class="ck ${r[5]}"><span class="cb"></span></div>`)}
                      </div>
                      <div class="foot"><div class="show">${t("Showing 1 - 2 of 2 records", 163)}</div><div class="pg pv">${t("« prev", 32)}</div><div class="pg on">1</div><div class="pg nx">${t("next »", 31)}</div></div>
                      <div class="sel"><svg width="13" height="10" viewBox="0 0 13 10"><path d="M1 8.500V1h3.500l1 1H10v2" fill="none" stroke="#ef8e0c" stroke-width="1.300"/><path d="M3.500 4.500H13l-2 4.500H1z" fill="#ef8e0c"/></svg>${t("Select Status", 73)}<svg class="dn" width="9" height="5"><path d="M0 0h9L4.500 4.500z" fill="#ef8e0c"/></svg></div>
                      <div class="btn abtn">${t("Apply to Selected", 101)}</div>
                    </div>
                  </div>
                </div>
              </div>
              <div class="sw"><i class="s1"></i><i class="s2"></i><i class="s3"></i><i class="s4"></i><i class="s5"></i><i class="s6"></i></div>
            </div>
            <div class="scroll"><svg width="15" height="14"><path d="M4 10h7L7.500 6z" fill="#a0a0a0"/></svg><div class="thumb"></div><svg class="down" width="15" height="14"><path d="M4 5h7L7.500 9z" fill="#505050"/></svg></div>
          </div>
        </div>
      </div>
      <svg class="cursor" width="13" height="20" viewBox="0 0 13 20"><path d="M1 1v16l3.500-3.300 2.500 5.300 2.500-1.200-2.500-5h5z" fill="#fff" stroke="#111" stroke-width="1.200"/></svg>
    `;
  }
}
